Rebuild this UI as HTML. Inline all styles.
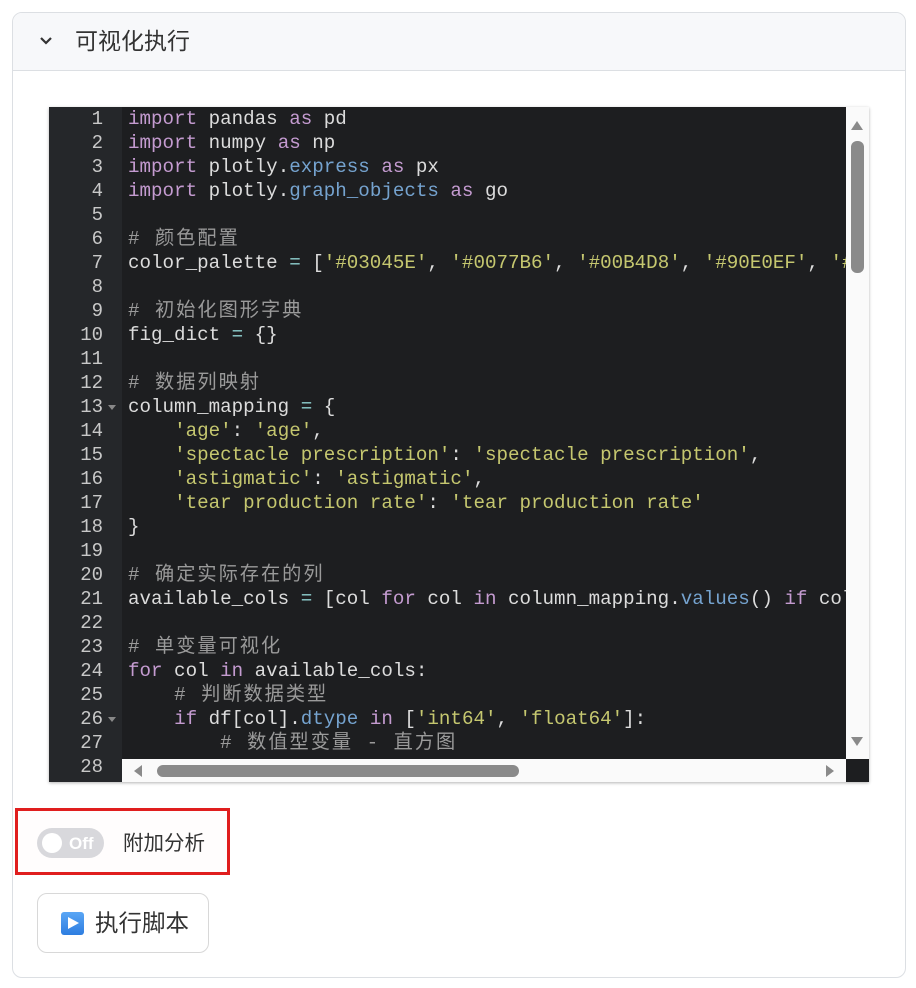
<!DOCTYPE html>
<html><head><meta charset="utf-8"><style>
*{box-sizing:border-box;margin:0;padding:0}
body{width:916px;height:988px;background:#fff;font-family:"Liberation Sans","Noto Sans CJK SC",sans-serif;position:relative;overflow:hidden}
.card{position:absolute;left:12px;top:12px;width:894px;height:966px;border:1px solid #dcdfe3;border-radius:10px;overflow:hidden}
.hdr{height:58px;background:#f7f8fa;border-bottom:1px solid #dcdfe3;position:relative}
.hdr .t{position:absolute;left:62px;top:13px;font-size:23px;line-height:30px;color:#333}
.hdr svg{position:absolute;left:26px;top:23px}
.ed{position:absolute;left:49px;top:107px;width:820px;height:675px;background:#1d1e20;overflow:hidden;box-shadow:0 1px 3px rgba(0,0,0,.3)}
.gut{position:absolute;left:0;top:0;width:73px;height:675px;background:#25272a}
.ln{position:absolute;left:0;top:0;width:54px;text-align:right;color:#c8c8c8;font:19px/24px "Liberation Mono","Noto Sans CJK SC",monospace}
.code{position:absolute;left:79px;top:0;width:718px;overflow:hidden;font:19.2px/24px "Liberation Mono","Noto Sans CJK SC",monospace;color:#dcdcdc}
.code div{height:24px;white-space:pre}
.k{color:#c49bd0}.s{color:#c5c76f}.a{color:#75a3cf}.c{color:#9a9a9a;letter-spacing:2px}.o{color:#8fd0d0}
.vs{position:absolute;left:797px;top:0;width:23px;height:652px;background:#fafafa}
.hs{position:absolute;left:73px;top:652px;width:724px;height:23px;background:#fafafa}
.corner{position:absolute;left:797px;top:652px;width:23px;height:23px;background:#1d1e20}
.fold{position:absolute;left:59px;width:0;height:0;border-left:4px solid transparent;border-right:4px solid transparent;border-top:5px solid #888}
.red{position:absolute;left:15px;top:808px;width:215px;height:67px;border:3px solid #e01e1e;background:#fffdfd}
.tog{position:absolute;left:37px;top:828px;width:67px;height:30px;border-radius:15px;background:#d8d8dc}
.tog .kn{position:absolute;left:5px;top:5px;width:20px;height:20px;border-radius:50%;background:#fff}
.tog .tx{position:absolute;left:32px;top:1px;line-height:30px;color:#fff;font-size:17px;font-weight:bold}
.lbl{position:absolute;left:123px;top:829px;font-size:20.5px;line-height:30px;color:#333}
.btn{position:absolute;left:37px;top:893px;width:172px;height:60px;border:1px solid #d8d8d8;border-radius:10px;background:#fff}
.btn .ic{position:absolute;left:23px;top:18px;width:23px;height:23px;border-radius:3px;background:linear-gradient(#5aa6f5,#2d7de0)}
.btn .ic:after{content:"";position:absolute;left:7px;top:5px;border-left:11px solid #fff;border-top:6.5px solid transparent;border-bottom:6.5px solid transparent}
.btn .t{position:absolute;left:57px;top:13px;font-size:23.5px;line-height:32px;color:#333}
</style></head><body>
<div class="card">
 <div class="hdr"><svg width="14" height="10" viewBox="0 0 14 10"><path d="M2 2l5 5 5-5" stroke="#333" stroke-width="2.2" fill="none"/></svg><span class="t">可视化执行</span></div>
</div>
<div class="ed">
 <div class="gut"></div>
 <div class="ln">1<br>2<br>3<br>4<br>5<br>6<br>7<br>8<br>9<br>10<br>11<br>12<br>13<br>14<br>15<br>16<br>17<br>18<br>19<br>20<br>21<br>22<br>23<br>24<br>25<br>26<br>27<br>28</div>
 <div class="fold" style="top:298px"></div>
 <div class="fold" style="top:610px"></div>
 <div class="code"><div><span class="k">import</span> pandas <span class="k">as</span> pd</div><div><span class="k">import</span> numpy <span class="k">as</span> np</div><div><span class="k">import</span> plotly.<span class="a">express</span> <span class="k">as</span> px</div><div><span class="k">import</span> plotly.<span class="a">graph_objects</span> <span class="k">as</span> go</div><div> </div><div><span class="c"># 颜色配置</span></div><div>color_palette <span class="o">=</span> [<span class="s">'#03045E'</span>, <span class="s">'#0077B6'</span>, <span class="s">'#00B4D8'</span>, <span class="s">'#90E0EF'</span>, <span class="s">'#CAF0F8'</span>]</div><div> </div><div><span class="c"># 初始化图形字典</span></div><div>fig_dict <span class="o">=</span> {}</div><div> </div><div><span class="c"># 数据列映射</span></div><div>column_mapping <span class="o">=</span> {</div><div>    <span class="s">'age'</span>: <span class="s">'age'</span>,</div><div>    <span class="s">'spectacle prescription'</span>: <span class="s">'spectacle prescription'</span>,</div><div>    <span class="s">'astigmatic'</span>: <span class="s">'astigmatic'</span>,</div><div>    <span class="s">'tear production rate'</span>: <span class="s">'tear production rate'</span></div><div>}</div><div> </div><div><span class="c"># 确定实际存在的列</span></div><div>available_cols <span class="o">=</span> [col <span class="k">for</span> col <span class="k">in</span> column_mapping.<span class="a">values</span>() <span class="k">if</span> col <span class="k">in</span> df.columns]</div><div> </div><div><span class="c"># 单变量可视化</span></div><div><span class="k">for</span> col <span class="k">in</span> available_cols:</div><div>    <span class="c"># 判断数据类型</span></div><div>    <span class="k">if</span> df[col].<span class="a">dtype</span> <span class="k">in</span> [<span class="s">'int64'</span>, <span class="s">'float64'</span>]:</div><div>        <span class="c"># 数值型变量 - 直方图</span></div><div> </div></div>
 <div class="vs"><svg width="23" height="652"><path d="M5 23l6-9 6 9z" fill="#8a8a8a"/><rect x="5" y="34" width="13" height="132" rx="6" fill="#8a8a8a"/><path d="M5 630l6 9 6-9z" fill="#8a8a8a"/></svg></div>
 <div class="hs"><svg width="724" height="23"><path d="M20 6l-8 6 8 6z" fill="#8a8a8a"/><rect x="35" y="6" width="362" height="12" rx="6" fill="#8a8a8a"/><path d="M704 6l8 6-8 6z" fill="#8a8a8a"/></svg></div>
 <div class="corner"></div>
</div>
<div class="red"></div>
<div class="tog"><div class="kn"></div><div class="tx">Off</div></div>
<div class="lbl">附加分析</div>
<div class="btn"><div class="ic"></div><div class="t">执行脚本</div></div>
</body></html>
